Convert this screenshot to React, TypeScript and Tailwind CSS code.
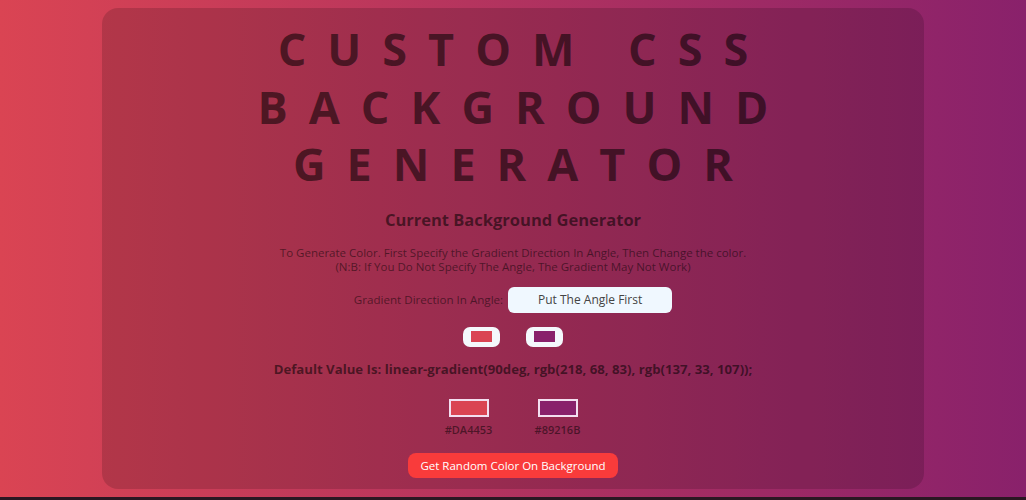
import React from "react"

const Swatch = ({ color, label }: { color: string; label: string }) => {
  return (
    <div className="w-[60px] flex flex-col items-center gap-[5px]">
      <div className="w-[40px] h-[18px] border-2 border-[#f3dff0]" style={{ backgroundColor: color }} />
      <span className="text-[11px] leading-[16px] font-semibold text-black/50">{label}</span>
    </div>
  )
}

const ColorPicker = ({ color }: { color: string }) => {
  return (
    <div className="w-[37px] h-[20px] rounded-[7px] bg-[#f4f8fc] flex items-center justify-center">
      <div className="w-[21px] h-[11px]" style={{ backgroundColor: color }} />
    </div>
  )
}

const App = () => {
  return (
    <div className="w-full h-[500px] bg-[#2a1722] font-['Open_Sans',sans-serif]">
      <main className="h-[497px] px-[102px] pt-[8px] bg-[linear-gradient(90deg,#da4453,#89216b)]">
        <div className="h-[481px] rounded-2xl bg-black/15 flex flex-col items-center">
          <h1 className="mt-[12px] text-center text-[45px] leading-[57.6px] font-bold tracking-[21px] pl-[21px] text-black/55 uppercase">
            Custom CSS
            <br />
            Background
            <br />
            Generator
          </h1>
          <h2 className="mt-[14px] text-[16.5px] leading-[25px] font-bold text-black/55">Current Background Generator</h2>
          <p className="mt-[14px] text-center text-[11.5px] leading-[14px] text-black/50">
            To Generate Color. First Specify the Gradient Direction In Angle, Then Change the color.
            <br />
            (N:B: If You Do Not Specify The Angle, The Gradient May Not Work)
          </p>
          <div className="mt-[13px] flex items-center gap-[5px]">
            <label className="text-[11.6px] text-black/50">Gradient Direction In Angle:</label>
            <input
              type="text"
              className="w-[164px] h-[26px] rounded-md bg-[#f0f8ff] text-center text-[12px] text-[#444] placeholder:text-[#444] outline-none"
              placeholder="Put The Angle First"
            />
          </div>
          <div className="mt-[14px] flex gap-[26px]">
            <ColorPicker color="#da4453" />
            <ColorPicker color="#89216b" />
          </div>
          <p className="mt-[12px] text-[13.2px] leading-[20px] font-bold text-black/55">
            Default Value Is: linear-gradient(90deg, rgb(218, 68, 83), rgb(137, 33, 107));
          </p>
          <div className="mt-[20px] flex gap-[29px]">
            <Swatch color="#da4453" label="#DA4453" />
            <Swatch color="#89216b" label="#89216B" />
          </div>
          <button className="mt-[15px] h-[25px] px-[12px] rounded-lg bg-[#f93b3b] text-white text-[11.5px] font-medium">
            Get Random Color On Background
          </button>
        </div>
      </main>
    </div>
  )
}

export default App
